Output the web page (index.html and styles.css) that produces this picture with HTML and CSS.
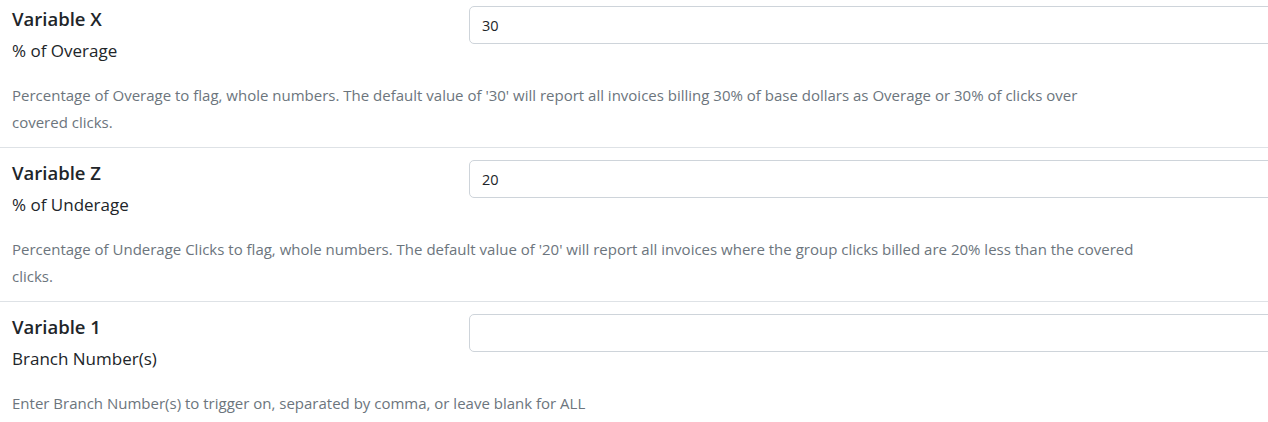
FILE: index.html
```html
<!DOCTYPE html>
<html lang="en">
<head>
<meta charset="utf-8">
<title>Variables</title>
<link rel="stylesheet" href="styles.css">
</head>
<body>
<div class="page">
  <div class="settings">
    <div class="setting">
      <div class="setting-row">
        <div class="setting-label">
          <div class="setting-title">Variable X</div>
          <div class="setting-sub">% of Overage</div>
        </div>
        <div class="setting-control">
          <input class="form-input" type="text" value="30">
        </div>
      </div>
      <p class="setting-help">Percentage of Overage to flag, whole numbers. The default value of '30' will report all invoices billing 30% of base dollars as Overage or 30% of clicks over covered clicks.</p>
    </div>
    <div class="setting">
      <div class="setting-row">
        <div class="setting-label">
          <div class="setting-title">Variable Z</div>
          <div class="setting-sub">% of Underage</div>
        </div>
        <div class="setting-control">
          <input class="form-input" type="text" value="20">
        </div>
      </div>
      <p class="setting-help">Percentage of Underage Clicks to flag, whole numbers. The default value of '20' will report all invoices where the group clicks billed are 20% less than the covered clicks.</p>
    </div>
    <div class="setting">
      <div class="setting-row">
        <div class="setting-label">
          <div class="setting-title">Variable 1</div>
          <div class="setting-sub">Branch Number(s)</div>
        </div>
        <div class="setting-control">
          <input class="form-input" type="text" value="">
        </div>
      </div>
      <p class="setting-help">Enter Branch Number(s) to trigger on, separated by comma, or leave blank for ALL</p>
    </div>
  </div>
</div>
</body>
</html>
```

FILE: styles.css
```css
html, body {
  margin: 0;
  padding: 0;
  background: #ffffff;
  overflow: hidden;
}

body {
  font-family: "Open Sans", "Noto Sans", "Liberation Sans", sans-serif;
  color: #212529;
}

.page {
  width: 1268px;
  height: 422px;
  overflow: hidden;
}

.settings {
  width: 1400px;
  margin-top: -6px;
}

.setting {
  padding: 12px 12px 0 12px;
  height: 154px;
  box-sizing: border-box;
  border-bottom: 1px solid #dee2e6;
}

.setting-row {
  display: grid;
  grid-template-columns: 457px 1fr;
}

.setting-label {
  margin-top: -1px;
}

.setting-title {
  font-size: 18.5px;
  font-weight: 600;
  line-height: 28px;
}

.setting-sub {
  font-size: 17px;
  line-height: 32px;
  margin-top: 2px;
}

.setting-control {
  display: flex;
}

.form-input {
  flex: 1;
  height: 38px;
  box-sizing: border-box;
  border: 1px solid #ced4da;
  border-radius: 5px;
  padding: 0 12px;
  font-family: inherit;
  font-size: 14.5px;
  color: #212529;
  background: #fff;
  outline: none;
}

.setting-help {
  margin: 15px 0 0 0;
  max-width: 1125px;
  font-size: 15px;
  line-height: 27px;
  color: #6c757d;
}
```
